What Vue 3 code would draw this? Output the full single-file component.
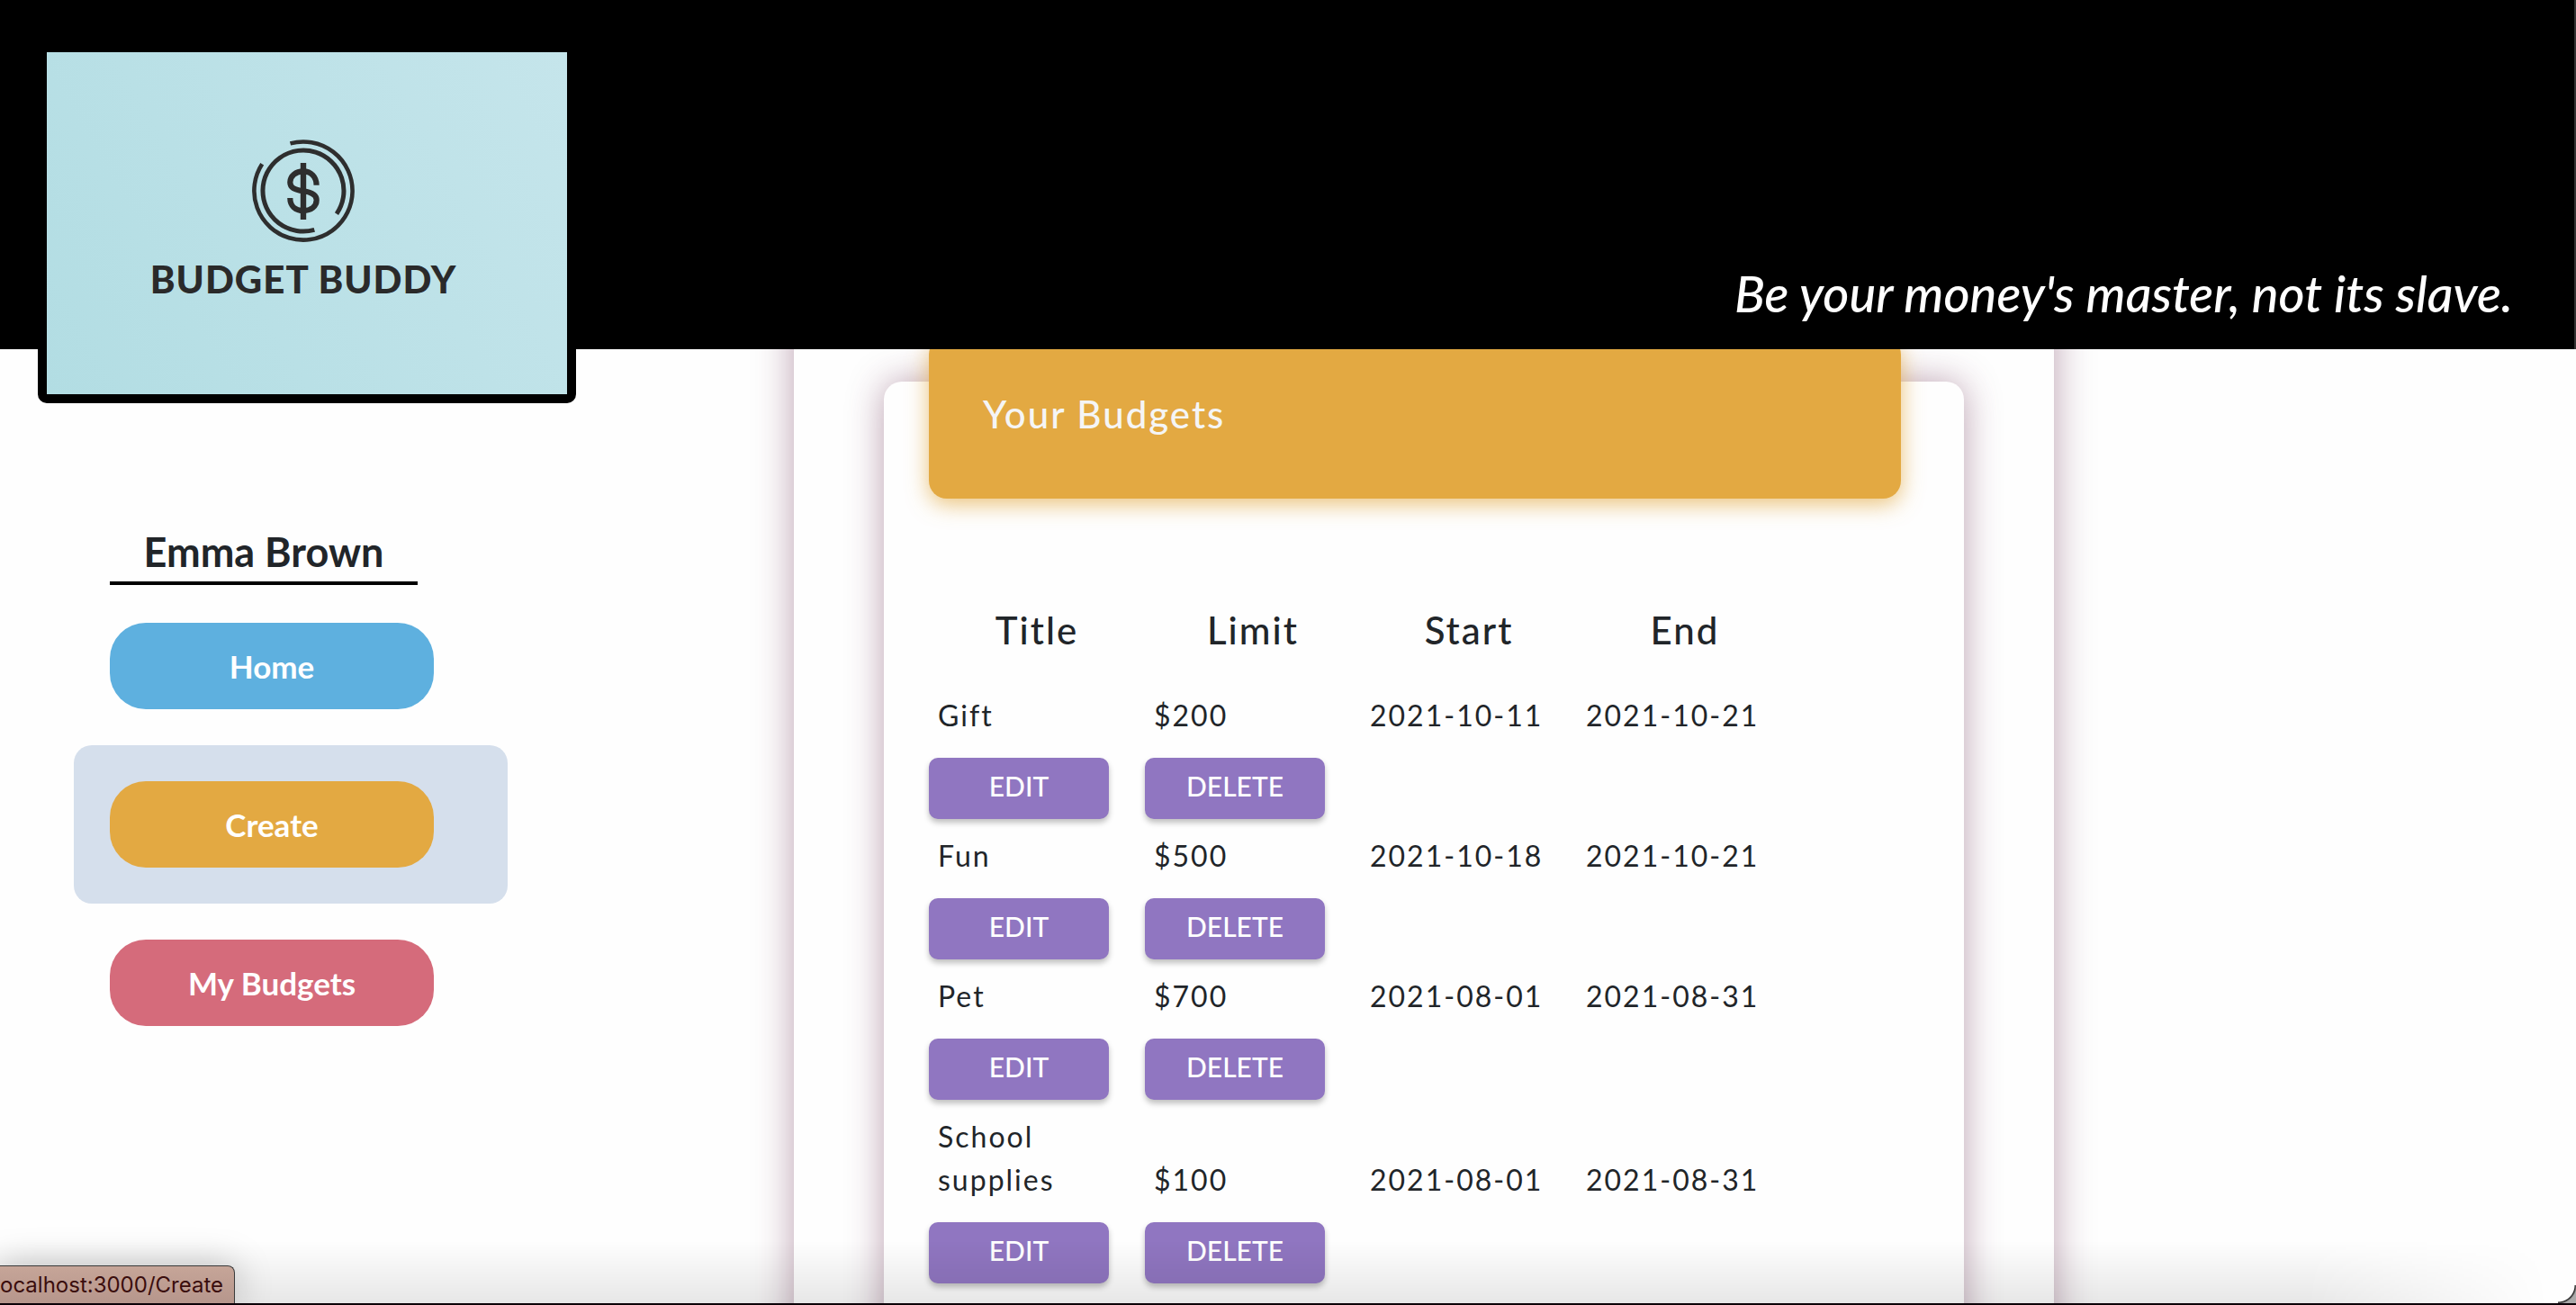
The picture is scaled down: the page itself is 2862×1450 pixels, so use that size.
<script setup>
const links = [
  { label: 'Home', href: '#home', tone: 'blue' },
  { label: 'Create', href: '#create', tone: 'amber', active: true },
  { label: 'My Budgets', href: '#budgets', tone: 'rose' },
]

const columns = ['Title', 'Limit', 'Start', 'End']

const budgets = [
  { title: 'Gift', limit: '$200', start: '2021-10-11', end: '2021-10-21' },
  { title: 'Fun', limit: '$500', start: '2021-10-18', end: '2021-10-21' },
  { title: 'Pet', limit: '$700', start: '2021-08-01', end: '2021-08-31' },
  { title: 'School supplies', limit: '$100', start: '2021-08-01', end: '2021-08-31' },
]
</script>

<template>
  <div class="app">
    <header class="banner">
      <div class="logo">
        <svg class="logo-mark" viewBox="-60 -60 120 120" aria-hidden="true">
          <g fill="none" stroke="#2e2e2e">
            <path stroke-width="4.6" d="M-14.500 -52.600A54.600 54.600 0 1 1 -45.800 -29.700" />
            <path stroke-width="5" d="M12.300 43.300A45 45 0 1 1 37 25.600" />
            <path stroke-width="6.400" d="M0 -31V32" />
            <path stroke-width="6.200" d="M14.600 -6.300C14.600 -15.500 8.500 -21.600 0 -21.600C-8.500 -21.600 -14.700 -16.500 -14.700 -9.500C-14.700 -3.500 -10 -1.200 0 .3C10 1.800 14.700 4.500 14.700 10.300C14.700 17.500 8.500 22 0 22C-8.500 22 -14.700 17 -14.700 8" />
          </g>
        </svg>
        <span class="logo-name">BUDGET BUDDY</span>
      </div>
      <p class="tagline">Be your money's master, not its slave.</p>
    </header>

    <div class="body">
      <aside class="sidebar">
        <h2 class="user">Emma Brown</h2>
        <nav class="nav">
          <div v-for="link in links" :key="link.label" class="nav-item" :class="{ active: link.active }">
            <a class="nav-link" :class="link.tone" :href="link.href">{{ link.label }}</a>
          </div>
        </nav>
      </aside>

      <main class="panel">
        <section class="card">
          <h1 class="card-title">Your Budgets</h1>
          <table class="budgets">
            <thead>
              <tr>
                <th v-for="column in columns" :key="column" scope="col">{{ column }}</th>
              </tr>
            </thead>
            <tbody v-for="budget in budgets" :key="budget.title">
              <tr>
                <td>{{ budget.title }}</td>
                <td>{{ budget.limit }}</td>
                <td>{{ budget.start }}</td>
                <td>{{ budget.end }}</td>
              </tr>
              <tr class="actions">
                <td><button type="button">EDIT</button></td>
                <td><button type="button">DELETE</button></td>
                <td colspan="2"></td>
              </tr>
            </tbody>
          </table>
        </section>
      </main>
    </div>

    <div class="shade"></div>
    <div class="corner"></div>
    <div class="status">ocalhost:3000/Create</div>
    <div class="edge"></div>
  </div>
</template>

<style>
body {
  margin: 0;
  background: #fff;
}
</style>

<style scoped>
.app {
  position: relative;
  display: flex;
  flex-direction: column;
  height: 100vh;
  overflow: hidden;
  background: #fefefe;
  color: #212529;
  font-family: Lato, "Open Sans", sans-serif;
}

.banner {
  position: relative;
  z-index: 2;
  box-sizing: border-box;
  flex: none;
  display: flex;
  justify-content: space-between;
  align-items: flex-start;
  height: 388px;
  padding: 48px 68px 0 42px;
  border-right: 2px solid #333;
  background: #000;
}

.logo {
  box-sizing: border-box;
  display: flex;
  flex-direction: column;
  align-items: center;
  width: 598px;
  height: 400px;
  padding: 94px 8px 0 0;
  border: 10px solid #000;
  border-radius: 10px;
  background: linear-gradient(60deg, #b2dde3, #c5e5eb) padding-box;
}

.logo-mark {
  width: 120px;
  height: 120px;
}

.logo-name {
  color: #2a2a2a;
  font-size: 42px;
  font-weight: 900;
  line-height: 76px;
  letter-spacing: 1px;
}

.tagline {
  margin: 238px 0 0;
  color: #fff;
  font-size: 56px;
  font-style: italic;
  font-weight: 500;
  line-height: 80px;
}

.body {
  flex: 1;
  display: flex;
  align-items: flex-start;
  min-height: 0;
}

.sidebar {
  box-sizing: border-box;
  flex: 0 0 882px;
  padding: 192px 318px 0 82px;
}

.user {
  width: 342px;
  margin: 0 0 2px 40px;
  border-bottom: 4px solid #000;
  font-size: 45px;
  font-weight: 700;
  line-height: 66px;
  text-align: center;
}

.nav-item {
  padding: 40px 82px 40px 40px;
  border-radius: 20px;
}

.nav-item.active {
  background: #d5dfec;
}

.nav-link {
  display: block;
  border-radius: 40px;
  color: #fff;
  font-size: 35px;
  font-weight: 700;
  line-height: 96px;
  text-align: center;
  text-decoration: none;
}

.blue {
  background: #5eb0df;
}

.amber {
  background: #e3a942;
}

.rose {
  background: #d56b7b;
}

.panel {
  box-sizing: border-box;
  flex: 0 1 1400px;
  margin-top: -60px;
  padding: 96px 100px 60px;
  background: #fefefe;
  box-shadow: 0 0 40px rgba(95, 30, 70, 0.42);
}

.card {
  padding: 0 70px 60px 50px;
  border-radius: 20px;
  background: #fefefe;
  box-shadow: 0 0 40px rgba(95, 30, 70, 0.42);
  letter-spacing: 2px;
}

.card-title {
  position: relative;
  top: -50px;
  margin: 0;
  padding: 56px 60px 64px;
  border-radius: 20px;
  background: #e3a942;
  box-shadow: 0 6px 24px rgba(227, 169, 66, 0.7);
  color: #f5f5f5;
  font-size: 42px;
  font-weight: 500;
  line-height: 60px;
}

.budgets {
  width: 960px;
  margin-top: 66px;
  border-collapse: collapse;
  table-layout: fixed;
}

.budgets th {
  padding: 0 0 41px;
  font-size: 42px;
  font-weight: 500;
  line-height: 60px;
}

.budgets td {
  padding: 0 10px;
  font-size: 32px;
  line-height: 48px;
  vertical-align: bottom;
}

.budgets .actions td {
  padding: 23px 40px 17px 0;
}

button {
  display: block;
  width: 100%;
  height: 68px;
  padding: 0 0 6px;
  border: 0;
  border-radius: 10px;
  background: #9076c1;
  box-shadow: 0 4px 6px rgba(0, 0, 0, 0.25);
  color: #fff;
  font: 500 30px Lato, "Open Sans", sans-serif;
}

.shade {
  position: absolute;
  z-index: 1;
  right: 0;
  bottom: 2px;
  left: 0;
  height: 70px;
  background: linear-gradient(transparent, rgba(0, 0, 0, 0.09));
  mask-image: linear-gradient(to left, transparent 30px, #000 300px);
}

.corner {
  position: absolute;
  right: 0;
  bottom: 2px;
  width: 20px;
  height: 20px;
  background: radial-gradient(circle at 0 0, transparent 18px, #222 19px, #aaa 21px);
}

.status {
  position: absolute;
  z-index: 2;
  bottom: 2px;
  left: 0;
  padding: 0 12px 0 0;
  border: 1px solid #3a3a3a;
  border-width: 1px 1px 0 0;
  border-radius: 0 8px 0 0;
  background: linear-gradient(#c6a598, #b6968c);
  box-shadow: 0 0 40px rgba(0, 0, 0, 0.25);
  color: #3a0d0d;
  font: 24px/41px Inter, sans-serif;
}

.edge {
  position: absolute;
  z-index: 3;
  right: 0;
  bottom: 0;
  left: 0;
  height: 2px;
  background: #0c0008;
}
</style>
